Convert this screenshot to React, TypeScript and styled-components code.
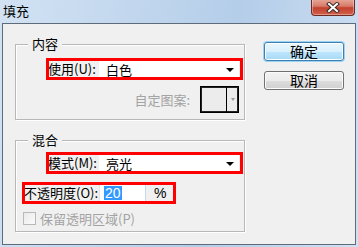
import React from 'react';
import styled, { createGlobalStyle } from 'styled-components';

const GlobalStyle = createGlobalStyle`
  html, body { margin:0; padding:0; }
  body {
    width:358px;
    height:247px;
    overflow:hidden;
    font-family: "Noto Sans CJK SC", "Liberation Sans", sans-serif;
    font-size:13px;
    color:#000;
  }
`;
const Frame = styled.div`
  width:358px;
  height:247px;
  box-sizing:border-box;
  padding:0 2px 2px 2px;
  display:flex;
  flex-direction:column;
  background: linear-gradient(100deg, #d2e2f3 0%, #bcd3ec 45%, #b4cde9 60%, #d0e1f3 100%);
`;
const TitleBar = styled.div`
  height:23px;
  display:flex;
  align-items:flex-start;
`;
const Title = styled.div`
  padding:3px 0 0 1px;
  font-size:13px;
  line-height:15px;
`;
const CloseBtn = styled.div`
  margin-left:auto;
  margin-right:1px;
  margin-top:-1px;
  width:44px;
  height:17px;
  box-sizing:border-box;
  border:1px solid #6e2a22;
  border-top:none;
  border-radius:0 0 4px 4px;
  background: linear-gradient(#e9a99c 0%, #d87a68 45%, #c2412e 55%, #d1604a 100%);
  box-shadow: inset 0 0 0 1px rgba(255,255,255,0.35);
  display:flex;
  align-items:center;
  justify-content:center;
`;
const Client = styled.div`
  flex:1;
  display:flex;
  align-items:flex-start;
  border:1px solid #5e6b7a;
  background:#f0f0f0;
  padding:18px 0 0 12px;
`;
const LeftCol = styled.div`
  margin-top:2px;
  width:230px;
  display:flex;
  flex-direction:column;
  gap:20px;
`;
const Group = styled.div<{ $h: number }>`
  position:relative;
  height:${p => p.$h}px;
  box-sizing:border-box;
  border:1px solid #b7b7b7;
  box-shadow: inset 1px 1px 0 #fff, 1px 1px 0 #fff;
  display:flex;
  flex-direction:column;
`;
const Legend = styled.div`
  position:absolute;
  top:-8px;
  left:12px;
  padding:0 4px;
  background:#f0f0f0;
  line-height:14px;
  font-size:13px;
`;
const Row = styled.div<{ $indent: number; $top: number }>`
  display:flex;
  align-items:center;
  height:18px;
  margin:${p => p.$top}px 0 0 ${p => p.$indent}px;
`;
const Marked = styled(Row)`
  outline:3px solid #ff0000;
  outline-offset:-1px;
`;
const Label = styled.div<{ $w: number }>`
  width:${p => p.$w}px;
  white-space:nowrap;
  line-height:16px;
`;
const Select = styled.div`
  width:140px;
  height:18px;
  box-sizing:border-box;
  border-top:1px solid #dcdcdc;
  background:#fff;
  display:flex;
  align-items:center;
  padding:0 5px 0 7px;
  line-height:16px;
`;
const Arrow = styled.span`
  margin-left:auto;
  width:0;
  height:0;
  border-left:4px solid transparent;
  border-right:4px solid transparent;
  border-top:4px solid #000;
`;
const PatternRow = styled.div`
  display:flex;
  align-items:center;
  justify-content:flex-end;
  gap:10px;
  width:189px;
  margin:8px 0 0 34px;
`;
const Dim = styled.div`
  color:#a3a3a3;
  white-space:nowrap;
`;
const Pattern = styled.div`
  width:39px;
  height:27px;
  box-sizing:border-box;
  border:1px solid #000;
  box-shadow: inset 0 0 0 1px #222;
  display:flex;
  background:#ececec;
`;
const PatternCell = styled.div`
  flex:1;
  border-right:1px solid #000;
`;
const PatternDrop = styled.div`
  width:11px;
  display:flex;
  align-items:center;
  justify-content:center;
  &::after {
    content:'';
    border-left:2px solid transparent;
    border-right:2px solid transparent;
    border-top:3px solid #9a9a9a;
  }
`;
const NumBox = styled.div`
  width:47px;
  height:18px;
  box-sizing:border-box;
  border:1px solid #c5d9ee;
  border-left-color:#e2e2e2;
  background:#fff;
  display:flex;
  align-items:center;
  padding-left:4px;
`;
const Selected = styled.span`
  background:#3399ff;
  color:#fff;
  line-height:14px;
  font-family:"Liberation Sans", sans-serif;
  font-size:14px;
  padding:0 1px;
`;
const Unit = styled.div`
  margin-left:8px;
  font-family:"Liberation Sans", sans-serif;
  font-size:14px;
`;
const CheckRow = styled.div`
  display:flex;
  align-items:center;
  gap:4px;
  margin:7px 0 0 7px;
`;
const Check = styled.div`
  width:13px;
  height:13px;
  box-sizing:border-box;
  border:1px solid #b9b9b9;
  background:linear-gradient(135deg, #eaeaea, #fbfbfb);
`;
const ButtonCol = styled.div`
  margin-left:19px;
  display:flex;
  flex-direction:column;
  gap:10px;
`;
const Button = styled.div<{ $default?: boolean }>`
  width:80px;
  height:19px;
  box-sizing:border-box;
  border:1px solid ${p => (p.$default ? '#3c7fb1' : '#707070')};
  border-radius:3px;
  background:${p =>
    p.$default
      ? 'linear-gradient(#eaf6fd 0%, #d9f0fc 50%, #bee6fd 51%, #a7d9f5 100%)'
      : 'linear-gradient(#f2f2f2 0%, #ebebeb 50%, #dddddd 51%, #cfcfcf 100%)'};
  box-shadow:${p => (p.$default ? '0 0 0 1px #9bd3f5, inset 0 0 0 1px #fff' : 'inset 0 0 0 1px #fcfcfc')};
  display:flex;
  align-items:center;
  justify-content:center;
  font-size:14px;
  line-height:15px;
`;

const App: React.FC = () => {
  return (
    <>
      <GlobalStyle />
      <Frame>
        <TitleBar>
          <Title>填充</Title>
          <CloseBtn>
            <svg width="14" height="11" viewBox="0 0 14 11">
              <path d="M3 2 L11 9 M11 2 L3 9" stroke="#3b2a2a" strokeWidth="4" strokeLinecap="square" />
              <path d="M3 2 L11 9 M11 2 L3 9" stroke="#fff" strokeWidth="2" strokeLinecap="square" />
            </svg>
          </CloseBtn>
        </TitleBar>
        <Client>
          <LeftCol>
            <Group $h={76}>
              <Legend>内容</Legend>
              <Marked $indent={32} $top={15} style={{ width: 193 }}>
                <Label $w={51}>使用(U):</Label>
                <Select>
                  白色
                  <Arrow />
                </Select>
              </Marked>
              <PatternRow>
                <Dim>自定图案:</Dim>
                <Pattern>
                  <PatternCell />
                  <PatternDrop />
                </Pattern>
              </PatternRow>
            </Group>
            <Group $h={92}>
              <Legend>混合</Legend>
              <Marked $indent={32} $top={13} style={{ width: 193 }}>
                <Label $w={51}>模式(M):</Label>
                <Select>
                  亮光
                  <Arrow />
                </Select>
              </Marked>
              <Marked $indent={8} $top={12} style={{ width: 150 }}>
                <Label $w={75}>不透明度(O):</Label>
                <NumBox>
                  <Selected>20</Selected>
                </NumBox>
                <Unit>%</Unit>
              </Marked>
              <CheckRow>
                <Check />
                <Dim>保留透明区域(P)</Dim>
              </CheckRow>
            </Group>
          </LeftCol>
          <ButtonCol>
            <Button $default>确定</Button>
            <Button>取消</Button>
          </ButtonCol>
        </Client>
      </Frame>
    </>
  );
};

export default App;
